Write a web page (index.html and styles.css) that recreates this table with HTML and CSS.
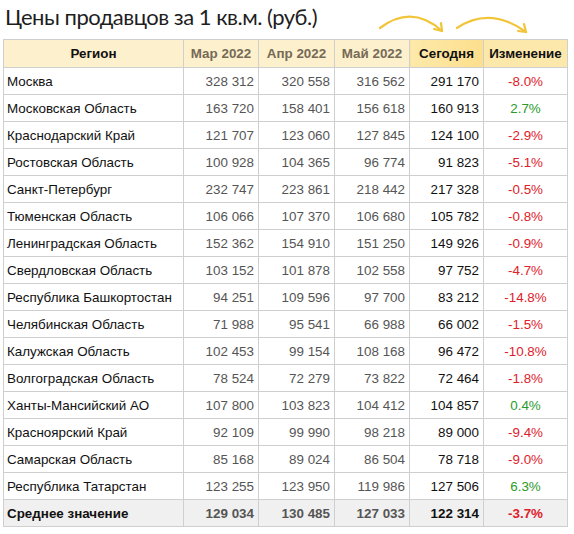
FILE: index.html
```html
<!DOCTYPE html>
<html lang="ru">
<head>
<meta charset="UTF-8">
<title>Цены продавцов</title>
<link rel="stylesheet" href="styles.css">
</head>
<body>

<div class="page">
    <div class="title-row">
        <h1 class="title">Цены продавцов за 1 кв.м. (руб.)</h1>
        <svg class="arrows" width="574" height="39" viewBox="0 0 574 39">
            <path d="M380 28 Q412 4 442 31" />
            <path d="M434 29 L442 31 L441 23" />
            <path d="M457 28 Q490 6 526 32" />
            <path d="M518 31 L526 32 L524 24" />
        </svg>
    </div>

    <table class="prices">
        <colgroup>
            <col style="width:180px">
            <col style="width:75px">
            <col style="width:76px">
            <col style="width:75px">
            <col style="width:74px">
            <col style="width:84px">
        </colgroup>
        <thead>
            <tr>
                <th class="region">Регион</th>
                <th class="month">Мар 2022</th>
                <th class="month">Апр 2022</th>
                <th class="month">Май 2022</th>
                <th class="today">Сегодня</th>
                <th class="change">Изменение</th>
            </tr>
        </thead>
        <tbody>
            <tr><td>Москва</td><td class="num">328 312</td><td class="num">320 558</td><td class="num">316 562</td><td class="num now">291 170</td><td class="pct down">-8.0%</td></tr>
            <tr><td>Московская Область</td><td class="num">163 720</td><td class="num">158 401</td><td class="num">156 618</td><td class="num now">160 913</td><td class="pct up">2.7%</td></tr>
            <tr><td>Краснодарский Край</td><td class="num">121 707</td><td class="num">123 060</td><td class="num">127 845</td><td class="num now">124 100</td><td class="pct down">-2.9%</td></tr>
            <tr><td>Ростовская Область</td><td class="num">100 928</td><td class="num">104 365</td><td class="num">96 774</td><td class="num now">91 823</td><td class="pct down">-5.1%</td></tr>
            <tr><td>Санкт-Петербург</td><td class="num">232 747</td><td class="num">223 861</td><td class="num">218 442</td><td class="num now">217 328</td><td class="pct down">-0.5%</td></tr>
            <tr><td>Тюменская Область</td><td class="num">106 066</td><td class="num">107 370</td><td class="num">106 680</td><td class="num now">105 782</td><td class="pct down">-0.8%</td></tr>
            <tr><td>Ленинградская Область</td><td class="num">152 362</td><td class="num">154 910</td><td class="num">151 250</td><td class="num now">149 926</td><td class="pct down">-0.9%</td></tr>
            <tr><td>Свердловская Область</td><td class="num">103 152</td><td class="num">101 878</td><td class="num">102 558</td><td class="num now">97 752</td><td class="pct down">-4.7%</td></tr>
            <tr><td>Республика Башкортостан</td><td class="num">94 251</td><td class="num">109 596</td><td class="num">97 700</td><td class="num now">83 212</td><td class="pct down">-14.8%</td></tr>
            <tr><td>Челябинская Область</td><td class="num">71 988</td><td class="num">95 541</td><td class="num">66 988</td><td class="num now">66 002</td><td class="pct down">-1.5%</td></tr>
            <tr><td>Калужская Область</td><td class="num">102 453</td><td class="num">99 154</td><td class="num">108 168</td><td class="num now">96 472</td><td class="pct down">-10.8%</td></tr>
            <tr><td>Волгоградская Область</td><td class="num">78 524</td><td class="num">72 279</td><td class="num">73 822</td><td class="num now">72 464</td><td class="pct down">-1.8%</td></tr>
            <tr><td>Ханты-Мансийский АО</td><td class="num">107 800</td><td class="num">103 823</td><td class="num">104 412</td><td class="num now">104 857</td><td class="pct up">0.4%</td></tr>
            <tr><td>Красноярский Край</td><td class="num">92 109</td><td class="num">99 990</td><td class="num">98 218</td><td class="num now">89 000</td><td class="pct down">-9.4%</td></tr>
            <tr><td>Самарская Область</td><td class="num">85 168</td><td class="num">89 024</td><td class="num">86 504</td><td class="num now">78 718</td><td class="pct down">-9.0%</td></tr>
            <tr><td>Республика Татарстан</td><td class="num">123 255</td><td class="num">123 950</td><td class="num">119 986</td><td class="num now">127 506</td><td class="pct up">6.3%</td></tr>
        </tbody>
        <tfoot>
            <tr class="average"><td>Среднее значение</td><td class="num">129 034</td><td class="num">130 485</td><td class="num">127 033</td><td class="num now">122 314</td><td class="pct down">-3.7%</td></tr>
        </tfoot>
    </table>
</div>

</body>
</html>
```

FILE: styles.css
```css
body {
    margin: 0;
    background: #fff;
    font-family: "Liberation Sans", Arial, sans-serif;
}

.page {
    padding: 0 3px;
}

.title-row {
    position: relative;
    height: 39px;
}

.title {
    margin: 0;
    padding: 3px 0 0 2px;
    font-family: Lato, "Open Sans", sans-serif;
    font-weight: 400;
    font-size: 22px;
    letter-spacing: -0.5px;
    line-height: 28px;
    color: #1e1e1e;
}

/* arrows pointing to the last two columns */
.arrows {
    position: absolute;
    left: -3px;
    top: 0;
    fill: none;
    stroke: #f2c438;
    stroke-width: 2.2;
    stroke-linecap: round;
    stroke-linejoin: round;
}

.prices {
    width: 564px;
    border-collapse: collapse;
    table-layout: fixed;
    font-size: 13.4px;
}

.prices th,
.prices td {
    border: 1px solid #cfcfcf;
    padding: 0 4px;
    white-space: nowrap;
}

.prices td:first-child {
    padding-left: 3px;
}

.prices th {
    height: 27px;
    background: #fdf0cd;
    font-weight: bold;
    color: #111;
    text-align: center;
}

.prices th.month {
    color: #756a56;
}

.prices th.today {
    background: linear-gradient(to right, #fde9ab, #fddf8c);
}

.prices th.change {
    background: #fde8ac;
}

.prices td {
    height: 26px;
    color: #111;
}

.num {
    text-align: right;
    color: #555 !important;
}

.num.now {
    color: #111 !important;
}

.pct {
    text-align: center;
}

.down {
    color: #e0202a !important;
}

.up {
    color: #2a9a2a !important;
}

.average td {
    background: #f0f0f0;
    font-weight: bold;
}
```
